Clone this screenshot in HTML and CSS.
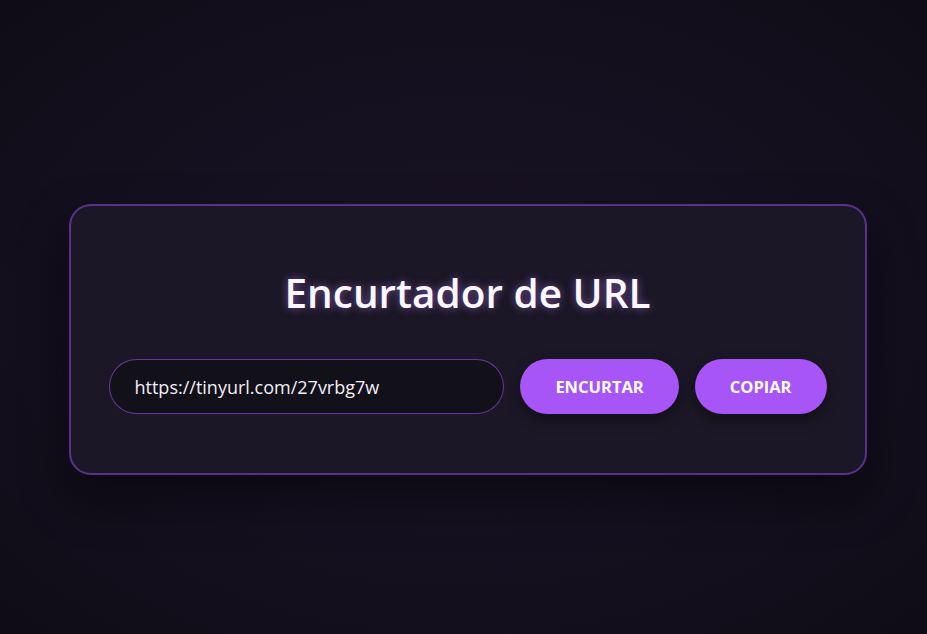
FILE: index.html
```html
<!DOCTYPE html>
<html lang="pt">
<head>
<meta charset="utf-8">
<title>Encurtador de URL</title>
<link rel="stylesheet" href="styles.css">
</head>
<body>
<main class="page">
  <section class="card">
    <h1 class="title">Encurtador de URL</h1>
    <div class="row">
      <input class="url-input" type="text" value="https://tinyurl.com/27vrbg7w">
      <button class="btn">ENCURTAR</button>
      <button class="btn">COPIAR</button>
    </div>
  </section>
</main>
</body>
</html>
```

FILE: styles.css
```css
html, body {
  margin: 0;
  padding: 0;
  height: 100%;
}
body {
  background: radial-gradient(ellipse at 50% 50%, #1b1526 0%, #15101f 50%, #0f0c17 100%);
  font-family: "Open Sans", "Noto Sans", sans-serif;
  color: #fff;
  overflow: hidden;
}
.page {
  box-sizing: border-box;
  height: 634px;
  display: flex;
  justify-content: center;
  align-items: flex-start;
  padding-top: 204px;
  padding-left: 8px;
}
.card {
  box-sizing: border-box;
  width: 798px;
  height: 271px;
  padding: 59px 38px 0 38px;
  background: #1b1726;
  border: 2px solid rgba(118, 60, 185, 0.7);
  border-radius: 22px;
  box-shadow: 0 22px 45px rgba(5, 3, 10, 0.55);
}
.title {
  margin: 0 0 39px;
  text-align: center;
  font-size: 40.5px;
  font-weight: 600;
  line-height: 55px;
  color: #fbf7ff;
  text-shadow: 0 0 8px rgba(190, 130, 255, 0.55);
}
.row {
  display: flex;
  align-items: center;
  gap: 16px;
}
.url-input {
  box-sizing: border-box;
  flex: 1;
  min-width: 0;
  height: 55px;
  padding: 0 25px;
  background: #121019;
  border: 1px solid rgba(140, 70, 220, 0.7);
  border-radius: 28px;
  color: #f2eef8;
  font-family: "Open Sans", "Noto Sans", sans-serif;
  font-size: 18px;
  outline: none;
}
.btn {
  box-sizing: border-box;
  flex: none;
  height: 55px;
  padding: 0 35px;
  background: #a855f7;
  border: none;
  border-radius: 28px;
  color: #fff;
  font-family: "Open Sans", "Noto Sans", sans-serif;
  font-size: 16.5px;
  font-weight: 700;
  box-shadow: 0 6px 14px rgba(0, 0, 0, 0.35);
  cursor: pointer;
}
```
